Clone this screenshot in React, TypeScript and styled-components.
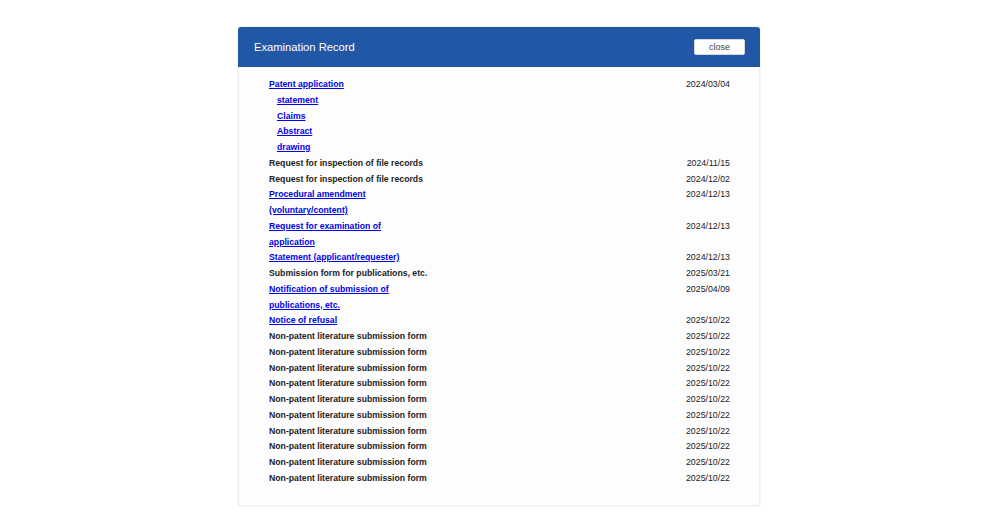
import { createGlobalStyle } from "styled-components";
import styled from "styled-components";

const GlobalStyle = createGlobalStyle`
  html, body {
    margin: 0;
    padding: 0;
    background: #ffffff;
    font-family: "Liberation Sans", Arial, sans-serif;
  }
`;

const Page = styled.div`
  display: flex;
  justify-content: center;
  padding-top: 27px;
  height: 523px;
  box-sizing: border-box;
`;

const Dialog = styled.div`
  width: 522px;
  height: 479px;
  margin-right: 2px;
  display: flex;
  flex-direction: column;
  border-radius: 3px;
  background: #fdfdfd;
  box-shadow: 0 0 2px rgba(0, 0, 0, 0.12);
  border: 1px solid #eeeeee;
  border-top: none;
  box-sizing: border-box;
`;

const Header = styled.div`
  display: flex;
  align-items: center;
  height: 40px;
  padding: 0 15px 0 16px;
  margin: 0 -1px;
  background: #2257a6;
  border-radius: 3px 3px 0 0;
`;

const Title = styled.h1`
  margin: 0;
  font-size: 11.2px;
  font-weight: normal;
  color: #ffffff;
  flex: 1;
`;

const CloseButton = styled.button`
  width: 51px;
  height: 16px;
  padding: 0;
  border: 1px solid #d8d8d8;
  border-radius: 2px;
  background: #ffffff;
  color: #444444;
  font-family: "Liberation Sans", Arial, sans-serif;
  font-size: 9px;
  line-height: 14px;
  cursor: pointer;
`;

const Body = styled.div`
  padding: 10px 29px 0 30px;
  display: grid;
  grid-template-columns: 160px 1fr auto;
  grid-auto-rows: minmax(15.75px, auto);
  font-size: 8.7px;
  line-height: 15.75px;
  color: #222222;
`;

const Name = styled.div<{ $indent?: boolean }>`
  grid-column: 1;
  padding-left: ${({ $indent }) => ($indent ? "8px" : "0")};
  font-weight: bold;
`;

const DocLink = styled.a`
  color: #0000ee;
  text-decoration: underline;
  cursor: pointer;
`;

const DateCell = styled.div`
  grid-column: 3;
  text-align: right;
  font-size: 8.8px;
  color: #222222;
`;

type Entry = { name: string; date?: string; link?: boolean; indent?: boolean };

const entries: Entry[] = [
  { name: "Patent application", date: "2024/03/04", link: true },
  { name: "statement", link: true, indent: true },
  { name: "Claims", link: true, indent: true },
  { name: "Abstract", link: true, indent: true },
  { name: "drawing", link: true, indent: true },
  { name: "Request for inspection of file records", date: "2024/11/15" },
  { name: "Request for inspection of file records", date: "2024/12/02" },
  { name: "Procedural amendment (voluntary/content)", date: "2024/12/13", link: true },
  { name: "Request for examination of application", date: "2024/12/13", link: true },
  { name: "Statement (applicant/requester)", date: "2024/12/13", link: true },
  { name: "Submission form for publications, etc.", date: "2025/03/21" },
  { name: "Notification of submission of publications, etc.", date: "2025/04/09", link: true },
  { name: "Notice of refusal", date: "2025/10/22", link: true },
  ...Array.from({ length: 10 }, () => ({
    name: "Non-patent literature submission form",
    date: "2025/10/22",
  })),
];

export default function App() {
  return (
    <>
      <GlobalStyle />
      <Page>
        <Dialog>
          <Header>
            <Title>Examination Record</Title>
            <CloseButton>close</CloseButton>
          </Header>
          <Body>
            {entries.map((e, i) => [
              <Name key={`n${i}`} $indent={e.indent}>
                {e.link ? <DocLink>{e.name}</DocLink> : e.name}
              </Name>,
              <DateCell key={`d${i}`}>{e.date ?? ""}</DateCell>,
            ])}
          </Body>
        </Dialog>
      </Page>
    </>
  );
}
